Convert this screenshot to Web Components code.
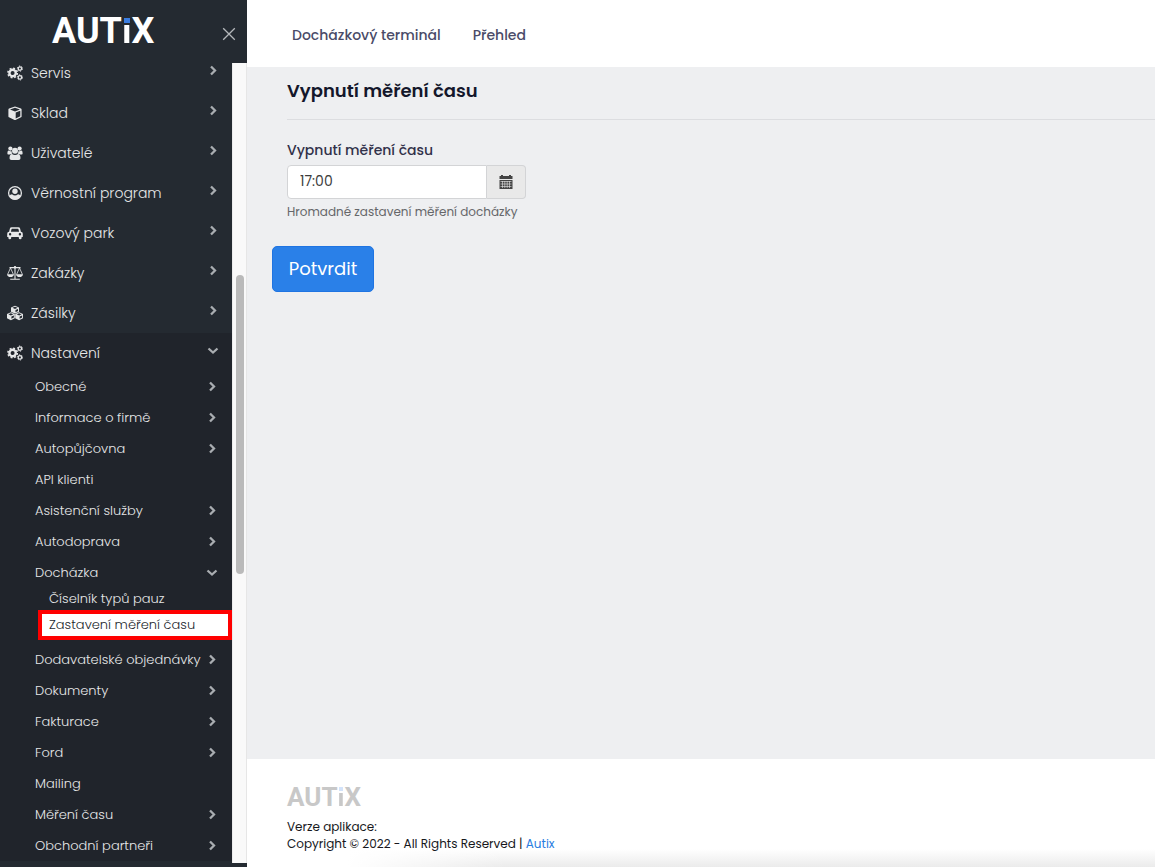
<!DOCTYPE html>
<html lang="cs">
<head>
<meta charset="utf-8">
<title>Autix – Vypnutí měření času</title>
<style>
  html, body { margin: 0; height: 100%; }
  body { font-family: Poppins, Inter, "Open Sans", sans-serif; background: #eeeff1; color: #1b1b28; }
</style>
</head>
<body>
<autix-app></autix-app>

<script>
const ICONS = {
  cogs: `<circle cx="5.6" cy="8" r="3.2" fill="none" stroke="currentColor" stroke-width="2.4"/><circle cx="5.6" cy="8" r="4.7" fill="none" stroke="currentColor" stroke-width="1.6" stroke-dasharray="1.9 1.79"/><circle cx="12.9" cy="3.6" r="1.7" fill="none" stroke="currentColor" stroke-width="1.3"/><circle cx="12.9" cy="3.6" r="2.6" fill="none" stroke="currentColor" stroke-width="1" stroke-dasharray="1.3 1.42"/><circle cx="12.9" cy="12.4" r="1.7" fill="none" stroke="currentColor" stroke-width="1.3"/><circle cx="12.9" cy="12.4" r="2.6" fill="none" stroke="currentColor" stroke-width="1" stroke-dasharray="1.3 1.42"/>`,
  cube: `<path fill="currentColor" fill-rule="evenodd" d="M8 1.4 14 3.6Q14.6 3.9 14.6 4.6V11.4Q14.6 12 14 12.3L8.5 14.9Q8 15.1 7.5 14.9L2 12.3Q1.4 12 1.4 11.4V4.6Q1.4 3.9 2 3.6ZM8 2.7 3 4.5 8 6.4 13 4.5ZM8.7 13.4 13.3 11.2V5.8L8.7 7.6Z"/>`,
  users: `<g fill="currentColor"><circle cx="3.4" cy="3.6" r="2.1"/><circle cx="12.6" cy="3.6" r="2.1"/><circle cx="8" cy="5.8" r="3"/><path d="M.4 8.8Q.4 5.5 1.8 5.6 3.4 6.8 4.5 6.1 4.6 7.8 5.4 8.7 3.6 8.7 2.8 9.6H1.2Q.4 9.6.4 8.8ZM15.6 8.8Q15.6 5.5 14.2 5.6 12.6 6.8 11.5 6.1 11.4 7.8 10.6 8.7 12.4 8.7 13.2 9.6H14.8Q15.6 9.6 15.6 8.8ZM5 9Q8 11 11 9 13.5 9.2 13.5 13.2 13.5 15 11.6 15H4.4Q2.5 15 2.5 13.2 2.5 9.2 5 9Z"/></g>`,
  user: `<circle cx="8" cy="8" r="6.4" fill="none" stroke="currentColor" stroke-width="1.3"/><circle cx="8" cy="6.3" r="2.7" fill="currentColor"/><path fill="currentColor" d="M2.4 11.2Q3 9.4 5 9.2 8 11.6 11 9.2 13 9.4 13.6 11.2 11.6 14.6 8 14.6 4.4 14.6 2.4 11.2Z"/>`,
  car: `<path fill="currentColor" fill-rule="evenodd" d="M4.6 2.2H11.4Q12.8 2.2 13.1 3.5L13.9 6.7Q15.8 6.9 15.8 8.8V12H14.6V12.9a1.3 1.3 0 0 1-2.8 0V12H4.2V12.9a1.3 1.3 0 0 1-2.8 0V12H.2V8.8Q.2 6.9 2.1 6.7L2.9 3.5Q3.2 2.2 4.6 2.2ZM5 3.8Q4.6 3.8 4.5 4.2L3.9 6.7H12.1L11.5 4.2Q11.4 3.8 11 3.8ZM3.1 8.1a1.2 1.2 0 1 0 0 2.4 1.2 1.2 0 0 0 0-2.4ZM12.9 8.1a1.2 1.2 0 1 0 0 2.4 1.2 1.2 0 0 0 0-2.4Z"/>`,
  scale: `<g fill="none" stroke="currentColor"><path stroke-width="1.1" d="M2.5 2.6H13.5M8 1.4V14.1M3.2 14.3H12.8"/><path stroke-width=".8" d="M3.5 3 .6 9.4M3.5 3 6.4 9.4M12.5 3 9.6 9.4M12.5 3 15.4 9.4"/></g><path fill="currentColor" d="M0 9.2H7Q6.6 12 3.5 12 .4 12 0 9.2ZM9 9.2H16Q15.6 12 12.5 12 9.4 12 9 9.2Z"/><circle cx="8" cy="2.2" r="1.2" fill="currentColor"/>`,
  cubes: `<path fill="currentColor" fill-rule="evenodd" d="M8 .8 12 2.4V6.7L8 8.6 4 6.7V2.4ZM8 1.8 5.4 2.8 8 3.9 10.6 2.8ZM8.5 7.2 11 6V3.9L8.5 5ZM3.9 7.3 7.8 8.9V13.3L3.9 15.2 0 13.3V8.9ZM3.9 8.3 1.4 9.3 3.9 10.4 6.4 9.3ZM4.4 13.8 6.9 12.6V10.4L4.4 11.5ZM12.1 7.3 16 8.9V13.3L12.1 15.2 8.2 13.3V8.9ZM12.1 8.3 9.6 9.3 12.1 10.4 14.6 9.3ZM12.6 13.8 15.1 12.6V10.4L12.6 11.5Z"/>`
};

class AutixLogo extends HTMLElement {
  connectedCallback() {
    this.attachShadow({ mode: 'open' }).innerHTML = `
      <style>
        :host { display: block; font-family: Roboto, sans-serif; font-weight: 700; font-size: var(--logo-size, 36px); line-height: 1; white-space: nowrap; color: var(--logo-color, #fff); }
        .i { position: relative; color: transparent; background: linear-gradient(transparent 36%, var(--logo-color, #fff) 36%); background-clip: text; -webkit-background-clip: text; }
        .i::before { content: ""; position: absolute; left: 20%; top: 18%; width: 60%; height: 12%; background: var(--logo-dot, #3b7de0); }
      </style><span>AUT<span class="i">i</span>X</span>`;
  }
}

class NavArrow extends HTMLElement {
  connectedCallback() {
    const d = this.hasAttribute('down') ? 'M1.5 3.5 6 7.5 10.5 3.5' : 'M4 1.5 8 5.5 4 9.5';
    this.attachShadow({ mode: 'open' }).innerHTML = `
      <style>:host { display: block; width: 12px; height: 11px; color: #a9adb1; } svg { display: block; }</style>
      <svg width="12" height="11" viewBox="0 0 12 11" fill="none" stroke="currentColor" stroke-width="2.3"><path d="${d}"/></svg>`;
  }
}

class NavItem extends HTMLElement {
  connectedCallback() {
    const icon = this.getAttribute('icon');
    const arrow = this.getAttribute('arrow');
    this.attachShadow({ mode: 'open' }).innerHTML = `
      <style>
        :host { display: block; color: #e6e7e8; font-weight: 300; }
        a { box-sizing: border-box; display: flex; align-items: center; height: 31px; padding: 0 14px 0 35px; font-size: 13px; color: inherit; text-decoration: none; white-space: nowrap; }
        .text { flex: 1; }
        .icon { width: 16px; height: 16px; margin-right: 8px; }
        :host([icon]) a { height: 40px; padding: 0 13px 0 7px; font-size: 14px; }
        :host([icon]) nav-arrow { margin-bottom: 6px; }
        :host([level="3"]) a { height: 22px; padding-left: 49px; }
        :host([active]) a { height: 30px; margin-left: 38px; padding-left: 7px; background: #fff; border: 4px solid #f00; color: #23272e; }
        :host([open]) { background: #20242b; }
      </style>
      <a href="#">${icon ? `<svg class="icon" viewBox="0 0 16 16">${ICONS[icon]}</svg>` : ''}<span class="text">${this.getAttribute('label')}</span>${arrow ? `<nav-arrow ${arrow === 'down' ? 'down' : ''}></nav-arrow>` : ''}</a>
      <slot></slot>`;
  }
}

class SideBar extends HTMLElement {
  connectedCallback() {
    const main = [['cogs', 'Servis'], ['cube', 'Sklad'], ['users', 'Uživatelé'], ['user', 'Věrnostní program'], ['car', 'Vozový park'], ['scale', 'Zakázky'], ['cubes', 'Zásilky']]
      .map(([i, l]) => `<nav-item icon="${i}" label="${l}" arrow="right"></nav-item>`).join('');
    const sub = names => names.map(n => `<nav-item label="${n}" ${/^(API klienti|Mailing)$/.test(n) ? '' : 'arrow="right"'}></nav-item>`).join('');
    this.attachShadow({ mode: 'open' }).innerHTML = `
      <style>
        :host { box-sizing: border-box; display: flex; flex-direction: column; width: 247px; height: 100%; padding-bottom: 4px; background: #242a31; }
        header { display: flex; flex: none; justify-content: space-between; height: 63px; padding: 0 11px 0 52px; box-sizing: border-box; }
        autix-logo { margin-top: 13px; }
        button { display: flex; align-self: flex-start; margin-top: 27px; padding: 0; border: 0; background: none; color: #b5b8bb; }
        .body { display: flex; flex: 1; min-height: 0; }
        nav { flex: 1; min-width: 0; overflow: hidden; }
        .list { margin-top: -10px; }
        .sub { margin-top: -2px; }
        .group { padding-bottom: 4px; }
        .track { box-sizing: border-box; width: 15px; padding: 212px 3px 0; background: #f9f9f9; border-left: 1px solid #ececec; border-right: 1px solid #e6e6e6; }
        .thumb { width: 8px; height: 299px; border-radius: 4px; background: #bababa; }
      </style>
      <header><autix-logo></autix-logo>
        <button aria-label="Zavřít"><svg width="14" height="14" viewBox="0 0 14 14" stroke="currentColor" stroke-width="1.3"><path d="M1.2 1.2 12.8 12.8M12.8 1.2 1.2 12.8"/></svg></button>
      </header>
      <div class="body">
        <nav><div class="list">${main}
          <nav-item icon="cogs" label="Nastavení" arrow="down" open><div class="sub">
            ${sub(['Obecné', 'Informace o firmě', 'Autopůjčovna', 'API klienti', 'Asistenční služby', 'Autodoprava'])}
            <nav-item label="Docházka" arrow="down"><div class="group">
              <nav-item level="3" label="Číselník typů pauz"></nav-item>
              <nav-item level="3" label="Zastavení měření času" active></nav-item>
            </div></nav-item>
            ${sub(['Dodavatelské objednávky', 'Dokumenty', 'Fakturace', 'Ford', 'Mailing', 'Měření času', 'Obchodní partneři'])}
          </div></nav-item>
        </div></nav>
        <div class="track"><div class="thumb"></div></div>
      </div>`;
  }
}

class TopBar extends HTMLElement {
  connectedCallback() {
    this.attachShadow({ mode: 'open' }).innerHTML = `
      <style>
        :host { display: block; background: #fff; }
        nav { display: flex; align-items: center; gap: 32px; height: 67px; padding: 4px 45px 0; box-sizing: border-box; }
        a { color: #4a4b68; font-size: 14px; font-weight: 500; text-decoration: none; }
      </style>
      <nav><a href="#">Docházkový terminál</a><a href="#">Přehled</a></nav>`;
  }
}

class TimeForm extends HTMLElement {
  connectedCallback() {
    this.attachShadow({ mode: 'open' }).innerHTML = `
      <style>
        :host { display: block; flex: 1; }
        h1 { margin: 0 0 0 40px; padding: 9px 0 14px; border-bottom: 1px solid #dcdde0; font-size: 18px; line-height: 29px; font-weight: 600; color: #14172b; }
        .field { display: flex; flex-direction: column; padding: 19px 40px 0; }
        label { font-size: 14px; line-height: 22px; font-weight: 500; color: #32324a; }
        .group { display: flex; width: 239px; height: 34px; margin-top: 4px; }
        input { box-sizing: border-box; flex: 1; min-width: 0; padding: 0 12px 2px; border: 1px solid #d3d4d6; border-radius: 4px 0 0 4px; background: #fff; color: #3c3c3c; font: inherit; font-size: 14px; }
        .group button { box-sizing: border-box; display: flex; align-items: center; justify-content: center; width: 39px; padding: 0; border: 1px solid #d3d4d6; border-left: 0; border-radius: 0 4px 4px 0; background: #e9e9e9; color: #444; }
        small { margin-top: 4px; font-size: 12px; line-height: 18px; color: #66676a; }
        .submit { display: block; min-width: 102px; height: 46px; margin: 25px 0 0 25px; padding: 0 15px 2px; border: 1px solid #1f74e2; border-radius: 5px; background: #2a80e8; color: #fff; font: inherit; font-size: 18px; }
      </style>
      <h1>Vypnutí měření času</h1>
      <form>
        <div class="field">
          <label for="time">Vypnutí měření času</label>
          <div class="group"><input id="time" type="text" value="17:00" aria-describedby="hint"><button type="button" aria-label="Kalendář">
            <svg width="14" height="14" viewBox="0 0 14 14"><path fill="currentColor" d="M.5 1H2V0H4V1H10V0H12V1H13.5V4H.5ZM.5 5H13.5V14H.5Z"/><path stroke="#e9e9e9" stroke-width=".6" d="M1.5 6.5H12.5M1.5 9H12.5M1.5 11.5H12.5M3.5 6V13M5.8 6V13M8.2 6V13M10.5 6V13"/></svg></button></div>
          <small id="hint">Hromadné zastavení měření docházky</small>
        </div>
        <button class="submit" type="button">Potvrdit</button>
      </form>`;
  }
}

class PageFooter extends HTMLElement {
  connectedCallback() {
    this.attachShadow({ mode: 'open' }).innerHTML = `
      <style>
        :host { box-sizing: border-box; display: block; padding: 25px 40px 15px; background: linear-gradient(90deg, #fff 100px, transparent 260px), linear-gradient(0deg, #ebebeb, #fff 18px); font-size: 12px; line-height: 17px; color: #17181c; --logo-size: 26px; --logo-color: #c8c8c8; --logo-dot: #d3e3fa; }
        autix-logo { margin-bottom: 8px; }
        p { margin: 0; }
        a { color: #2a7de1; text-decoration: none; }
      </style>
      <autix-logo></autix-logo>
      <p>Verze aplikace:</p>
      <p>Copyright © 2022 - All Rights Reserved | <a href="#">Autix</a></p>`;
  }
}

class AutixApp extends HTMLElement {
  connectedCallback() {
    this.attachShadow({ mode: 'open' }).innerHTML = `
      <style>
        :host { display: grid; grid-template-columns: auto 1fr; height: 100vh; overflow: hidden; }
        side-bar { min-height: 0; }
        main { display: flex; flex-direction: column; min-width: 0; background: #eeeff1; }
      </style>
      <side-bar></side-bar>
      <main><top-bar></top-bar><time-form></time-form><page-footer></page-footer></main>`;
  }
}

customElements.define('autix-logo', AutixLogo);
customElements.define('nav-arrow', NavArrow);
customElements.define('nav-item', NavItem);
customElements.define('side-bar', SideBar);
customElements.define('top-bar', TopBar);
customElements.define('time-form', TimeForm);
customElements.define('page-footer', PageFooter);
customElements.define('autix-app', AutixApp);
</script>
</body>
</html>
